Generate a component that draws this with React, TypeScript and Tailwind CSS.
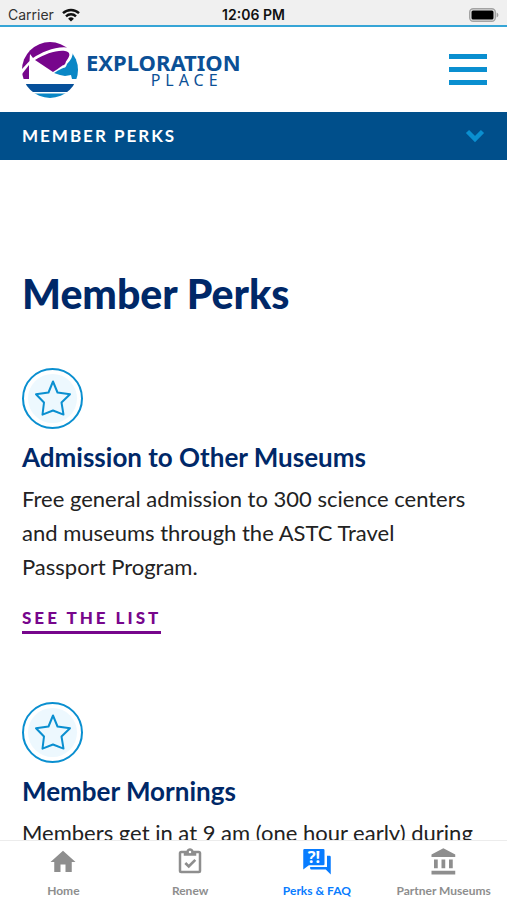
import { useState } from 'react';

interface Perk {
  title: string;
  text: string;
  link?: string;
}

const PERKS: Perk[] = [
  {
    title: 'Admission to Other Museums',
    text: 'Free general admission to 300 science centers and museums through the ASTC Travel Passport Program.',
    link: 'See the list',
  },
  {
    title: 'Member Mornings',
    text: 'Members get in at 9 am (one hour early) during',
  },
];

function StatusBar() {
  return (
    <div className="grid h-[25px] shrink-0 grid-cols-3 items-center bg-[#f0f0f0] px-2 pt-1 font-['Inter',sans-serif] text-sm leading-5 text-[#111]">
      <div className="flex items-center gap-2">
        <span className="text-[#333]">Carrier</span>
        <svg viewBox="0 0 18 14" className="h-3.5 w-[18px]" fill="none" stroke="#111" strokeWidth="2.4">
          <path d="M1 5.2a11.5 11.5 0 0 1 16 0" />
          <path d="M4 8.3a7.2 7.2 0 0 1 10 0" />
          <path d="M9 13.6 6.1 10.7a4.2 4.2 0 0 1 5.8 0z" fill="#111" stroke="none" />
        </svg>
      </div>
      <span className="text-center font-semibold whitespace-nowrap">12:06 PM</span>
      <svg viewBox="0 0 30 14" className="h-3.5 w-[30px] justify-self-end">
        <rect x="0.7" y="0.7" width="25.6" height="12.6" rx="3.5" fill="#e4e4e4" stroke="#a3a3a3" strokeWidth="1.4" />
        <rect x="2.5" y="2.5" width="22" height="9" rx="1.5" fill="#000" />
        <path d="M27.6 4.5v5c1.1-.4 1.8-1.4 1.8-2.5s-.7-2.1-1.8-2.5z" fill="#a3a3a3" />
      </svg>
    </div>
  );
}

function Logo() {
  return (
    <a href="#home" className="flex items-center gap-2 text-[#0b5096]">
      <svg viewBox="0 0 56 56" className="size-14" aria-hidden="true">
        <defs>
          <clipPath id="disc">
            <circle cx="28" cy="28" r="28" />
          </clipPath>
        </defs>
        <g clipPath="url(#disc)">
          <rect width="56" height="56" fill="#fff" />
          {/* purple sky behind the sail */}
          <path d="M0 0h48v6C36 3 20 10 11 16L8 12 7.500 19 0 27z" fill="#77068c" />
          <path d="M0 32 7 23V37H0z" fill="#77068c" />
          <path d="M13 18C23 12 34 8 43 9c6 1 5 5 2 9-2 2-1 4-3 5-2 0-4 3-11 7z" fill="#77068c" />
          {/* blue sky */}
          <path d="M51 9h5v28h-6l-1-4-6 1-5-1-6-2c5-3 7-4 9-5 2 0 3-1 4-4 4-4 6-8 6-13z" fill="#0a87c6" />
          <path d="M3 42h50l-5 8H8z" fill="#06509a" />
          <path d="M7 51.500h42V56H7z" fill="#0a87c6" />
        </g>
      </svg>
      <span className="flex flex-col items-end font-['Noto_Sans',sans-serif]">
        <span className="text-[22px] leading-5 font-bold">EXPLORATION</span>
        <span className="pr-[18px] text-base leading-4 tracking-[5px]">PLACE</span>
      </span>
    </a>
  );
}

function StarBadge() {
  return (
    <div className="flex size-[61px] items-center justify-center rounded-full border-2 border-[#0a8fd0] p-1">
      <div className="flex size-full items-center justify-center rounded-full bg-[#edf8fe]">
        <svg viewBox="0 0 38 38" className="size-[38px] shrink-0" fill="none" stroke="#0a8fd0" strokeWidth="2" strokeLinejoin="round">
          <path d="M19 1.500 23.500 12.500 36 14.200 27.500 22.500 29.500 34.600 19 30.500 8.500 34.600 10 22.500 2 14.200 14.500 12.500z" />
        </svg>
      </div>
    </div>
  );
}

function PerkCard({ perk }: { perk: Perk }) {
  return (
    <article className="flex flex-col items-start">
      <StarBadge />
      <h2 className="mt-3 text-[26px] leading-8 font-bold text-[#002868]">{perk.title}</h2>
      <p className="mt-[9px] pr-2 text-[22px] leading-[34px] text-[#222]">{perk.text}</p>
      {perk.link && (
        <a
          href="#list"
          className="mt-[22px] border-b-[3px] border-[#77068c] pb-px text-[17px] leading-6 font-black tracking-[3px] text-[#77068c] uppercase"
        >
          {perk.link}
        </a>
      )}
    </article>
  );
}

const TABS = [
  {
    label: 'Home',
    icon: <path d="M10 20v-6h4v6h5v-8h3L12 3 2 12h3v8z" />,
  },
  {
    label: 'Renew',
    icon: (
      <path d="M19 3h-4.180C14.400 1.840 13.300 1 12 1c-1.300 0-2.400.84-2.820 2H5a2 2 0 0 0-2 2v14a2 2 0 0 0 2 2h14a2 2 0 0 0 2-2V5a2 2 0 0 0-2-2zm-7 0a1 1 0 0 1 1 1 1 1 0 0 1-1 1 1 1 0 0 1-1-1 1 1 0 0 1 1-1zM7 7h10V5h2v14H5V5h2zm.5 6.500L9 12l2 2 4.500-4.500L17 11l-6 6z" />
    ),
  },
  {
    label: 'Perks & FAQ',
    icon: (
      <>
        <path d="M2 1.500h15a1 1 0 0 1 1 1v11a1 1 0 0 1-1 1H5.500L1 18V2.500a1 1 0 0 1 1-1z" />
        <path d="M20 7h2a1 1 0 0 1 1 1v14l-4-4H7.500a1 1 0 0 1-1-1v-1H20z" />
        <text x="9.500" y="12.500" textAnchor="middle" fontSize="13" fontWeight="700" fill="#fff" fontFamily="Noto Sans, sans-serif">
          ?!
        </text>
      </>
    ),
  },
  {
    label: 'Partner Museums',
    icon: <path d="M4 10v7h3v-7zm6 0v7h3v-7zM2 22h19v-3H2zm14-12v7h3v-7zm-4.500-9L2 6v2h19V6z" />,
  },
];

function TabBar() {
  const [active, setActive] = useState('Perks & FAQ');

  return (
    <nav className="grid h-[60px] shrink-0 grid-cols-4 border-t border-[#ececec] bg-white">
      {TABS.map((tab) => (
        <button
          key={tab.label}
          onClick={() => setActive(tab.label)}
          className={`flex flex-col items-center gap-1.5 pt-1.5 text-xs leading-4 font-bold whitespace-nowrap ${
            active === tab.label ? 'text-[#087cff]' : 'text-[#8e8e8e]'
          }`}
        >
          <svg viewBox="0 0 24 24" className="size-[30px]" fill="currentColor" aria-hidden="true">
            {tab.icon}
          </svg>
          {tab.label}
        </button>
      ))}
    </nav>
  );
}

export default function App() {
  return (
    <div className="flex h-screen flex-col overflow-hidden bg-white font-['Lato',sans-serif]">
      <StatusBar />

      <header className="flex h-[87px] shrink-0 items-center justify-between border-t-2 border-[#36a5d6] pr-5 pl-[22px]">
        <Logo />
        <button aria-label="Menu" className="flex w-[38px] flex-col gap-2">
          <span className="h-[5px] bg-[#0a8fd0]" />
          <span className="h-[5px] bg-[#0a8fd0]" />
          <span className="h-[5px] bg-[#0a8fd0]" />
        </button>
      </header>

      <button className="flex h-12 shrink-0 items-center justify-between bg-[#004f8b] px-[22px] text-[17px] font-bold tracking-[2px] text-white uppercase">
        Member Perks
        <svg viewBox="0 0 20 14" className="h-3.5 w-5" fill="none" stroke="#0a8fd0" strokeWidth="4.500">
          <path d="m2.500 2.500 7.500 7.500 7.500-7.500" />
        </svg>
      </button>

      <main className="min-h-0 flex-1 overflow-hidden px-[22px] pt-[108px]">
        <h1 className="text-[41px] leading-[52px] font-black text-[#002868]">Member Perks</h1>
        <div className="mt-12 flex flex-col gap-[68px]">
          {PERKS.map((perk) => (
            <PerkCard key={perk.title} perk={perk} />
          ))}
        </div>
      </main>

      <TabBar />
    </div>
  );
}
